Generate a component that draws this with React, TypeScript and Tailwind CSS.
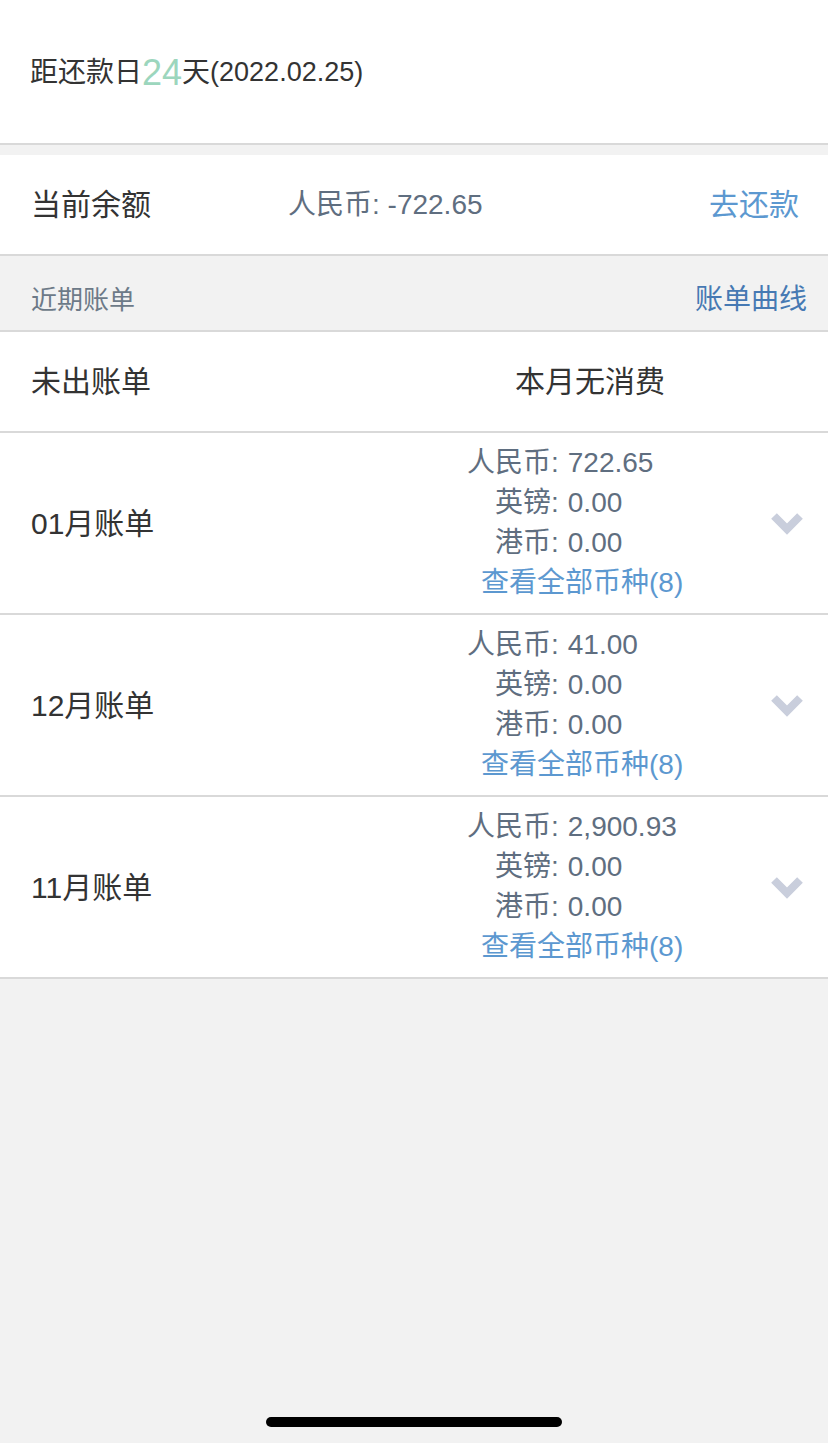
const bills = [
    {
        id: 1,
        name: "01月账单",
        lines: [
            { label: "人民币:", value: "722.65" },
            { label: "英镑:", value: "0.00" },
            { label: "港币:", value: "0.00" },
        ],
    },
    {
        id: 2,
        name: "12月账单",
        lines: [
            { label: "人民币:", value: "41.00" },
            { label: "英镑:", value: "0.00" },
            { label: "港币:", value: "0.00" },
        ],
    },
    {
        id: 3,
        name: "11月账单",
        lines: [
            { label: "人民币:", value: "2,900.93" },
            { label: "英镑:", value: "0.00" },
            { label: "港币:", value: "0.00" },
        ],
    },
];

function Chevron() {
    return (
        <svg width="36" height="26" viewBox="0 0 36 26" fill="none">
            <polyline
                points="5,6 18,19 31,6"
                stroke="#c9cedc"
                strokeWidth="8"
                strokeLinejoin="miter"
            />
        </svg>
    );
}

export default function App() {
    return (
        <div className="min-h-[1443px] flex flex-col bg-[#f2f2f2] text-[#333333] font-['Liberation_Sans','Noto_Sans_CJK_SC',sans-serif]">
            {/* due date */}
            <div className="h-[143px] bg-white flex items-center pl-[30px] pt-[2px] text-[28px]">
                <span>距还款日</span>
                <span className="text-[36px] text-[#9cd6bd] leading-none">24</span>
                <span>天</span>
                <span className="text-[27px]">(2022.02.25)</span>
            </div>
            <div className="h-[2px] bg-[#d9d9d9]" />
            <div className="h-[10px]" />

            {/* balance */}
            <div className="h-[99px] bg-white flex items-center pl-[31px] pr-[29px]">
                <span className="w-[257px] text-[30px]">当前余额</span>
                <span className="flex-1 text-[28px] text-[#5f6e80]">人民币: -722.65</span>
                <span className="text-[30px] text-[#5c98d0]">去还款</span>
            </div>
            <div className="h-[2px] bg-[#d9d9d9]" />

            {/* recent header */}
            <div className="h-[74px] pt-[14px] flex items-center justify-between pl-[31px] pr-[21px]">
                <span className="text-[26px] text-[#6d7a88]">近期账单</span>
                <span className="text-[28px] text-[#4679b3]">账单曲线</span>
            </div>
            <div className="h-[2px] bg-[#d9d9d9]" />

            {/* unbilled */}
            <div className="h-[99px] bg-white flex items-center pl-[31px]">
                <span className="w-[484px] text-[30px]">未出账单</span>
                <span className="text-[30px]">本月无消费</span>
            </div>
            <div className="h-[2px] bg-[#d9d9d9]" />

            {bills.map((bill) => (
                <div key={bill.id}>
                    <div className="h-[180px] bg-white flex items-center pl-[31px] pr-[23px]">
                        <span className="w-[436px] text-[30px]">{bill.name}</span>
                        <div className="flex-1 grid grid-cols-[auto_1fr] gap-x-[9px] text-[28px] leading-[40px] text-[#5f6e80]">
                            {bill.lines.map((line) => (
                                <div key={line.label} className="contents">
                                    <span className="text-right">{line.label}</span>
                                    <span>{line.value}</span>
                                </div>
                            ))}
                            <span className="col-span-2 pl-[14px] text-[#5c98d0]">查看全部币种(8)</span>
                        </div>
                        <Chevron />
                    </div>
                    <div className="h-[2px] bg-[#d9d9d9]" />
                </div>
            ))}

            {/* home indicator */}
            <div className="mt-auto pb-[16px] flex justify-center">
                <div className="w-[296px] h-[10px] rounded-full bg-black" />
            </div>
        </div>
    );
}
